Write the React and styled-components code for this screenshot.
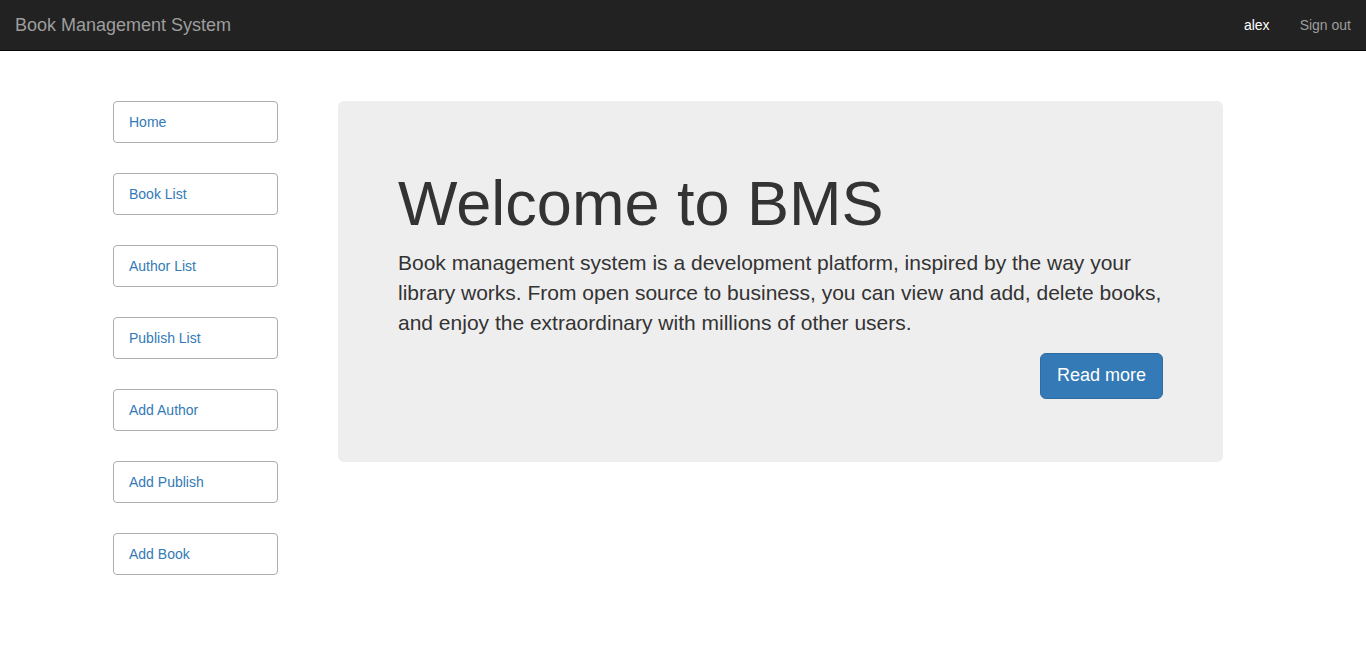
import styled, { createGlobalStyle } from 'styled-components';

const GlobalStyle = createGlobalStyle`
  * { box-sizing: border-box; }
  body {
    margin: 0;
    font-family: "Liberation Sans", Arial, sans-serif;
    font-size: 14px;
    line-height: 1.42857;
    color: #333;
    background: #fff;
  }
`;

const links = ['Home', 'Book List', 'Author List', 'Publish List', 'Add Author', 'Add Publish', 'Add Book'];

const App = () => {
  return (
    <>
      <GlobalStyle />
      <Navbar>
        <Brand href="#">Book Management System</Brand>
        <NavRight>
          <NavLink active>alex</NavLink>
          <NavLink>Sign out</NavLink>
        </NavRight>
      </Navbar>
      <Main>
        <Sidebar>
          {links.map(l => (
            <SideButton key={l} href="#">{l}</SideButton>
          ))}
        </Sidebar>
        <Jumbotron>
          <Heading>Welcome to BMS</Heading>
          <Lead>
            Book management system is a development platform, inspired by the way your
            library works. From open source to business, you can view and add, delete books,
            and enjoy the extraordinary with millions of other users.
          </Lead>
          <Actions>
            <PrimaryButton href="#">Read more</PrimaryButton>
          </Actions>
        </Jumbotron>
      </Main>
    </>
  );
};

export default App;

const Navbar = styled.nav`
  height: 51px;
  background: #222;
  border-bottom: 1px solid #080808;
  display: flex;
  align-items: center;
  justify-content: space-between;
`

const Brand = styled.a`
  padding: 0 15px;
  font-size: 18px;
  line-height: 50px;
  color: #9d9d9d;
  text-decoration: none;
`

const NavRight = styled.div`
  display: flex;
`

const NavLink = styled.a`
  padding: 0 15px;
  line-height: 50px;
  font-size: 14px;
  color: ${props => props.active ? '#fff' : '#9d9d9d'};
  cursor: pointer;
`

const Main = styled.div`
  display: flex;
  align-items: flex-start;
  padding: 50px 0 0 113px;
  gap: 60px;
`

const Sidebar = styled.div`
  width: 165px;
  display: flex;
  flex-direction: column;
  gap: 30px;
`

const SideButton = styled.a`
  display: block;
  height: 42px;
  line-height: 40px;
  padding: 0 15px;
  border: 1px solid #adadad;
  border-radius: 4px;
  color: #337ab7;
  font-size: 14px;
  text-decoration: none;
  background: #fff;
`

const Jumbotron = styled.div`
  width: 885px;
  height: 361px;
  background: #eee;
  border-radius: 6px;
  padding: 68px 60px 0 60px;
`

const Heading = styled.h1`
  margin: 0 0 10px;
  font-size: 63px;
  font-weight: 500;
  line-height: 1.1;
  color: #333;
`

const Lead = styled.p`
  margin: 0 0 15px;
  font-size: 21px;
  line-height: 30px;
  font-weight: 200;
`

const Actions = styled.div`
  display: flex;
  justify-content: flex-end;
`

const PrimaryButton = styled.a`
  display: inline-block;
  padding: 10px 16px;
  font-size: 18px;
  line-height: 1.3333;
  border-radius: 6px;
  color: #fff;
  background: #337ab7;
  border: 1px solid #2e6da4;
  text-decoration: none;
`
